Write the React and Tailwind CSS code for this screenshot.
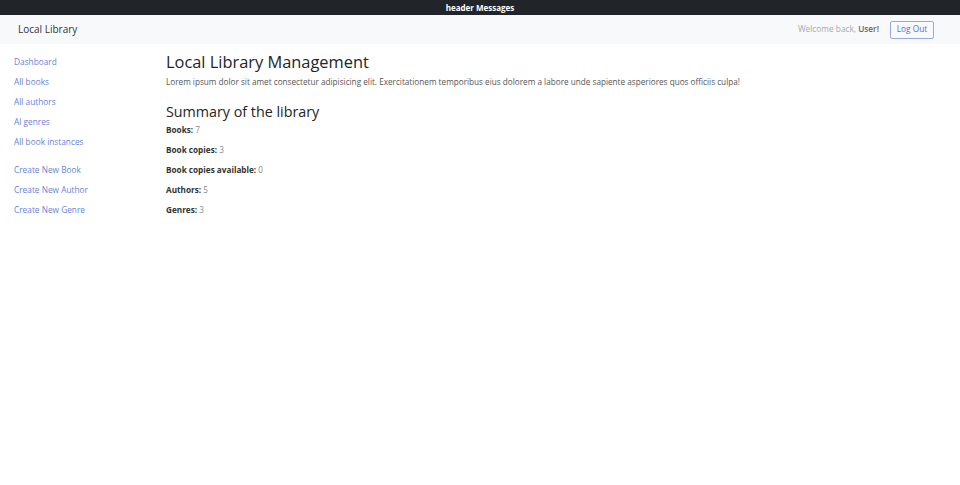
export default function App() {
  const links1 = ["Dashboard", "All books", "All authors", "Al genres", "All book instances"];
  const links2 = ["Create New Book", "Create New Author", "Create New Genre"];
  const stats = [
    ["Books:", "7"],
    ["Book copies:", "3"],
    ["Book copies available:", "0"],
    ["Authors:", "5"],
    ["Genres:", "3"],
  ];
  return (
    <div className="min-h-[485px] bg-white text-[#212529]" style={{ fontFamily: '"Open Sans", "Noto Sans", sans-serif' }}>
      <div className="h-[15px] bg-[#212529] flex items-center justify-center text-white text-[8px] font-bold">
        header Messages
      </div>
      <div className="h-[29px] bg-[#f8f9fa] flex items-center pl-[18px] pr-[26px]">
        <span className="text-[10px] text-[#333]">Local Library</span>
        <div className="ml-auto flex items-center">
          <span className="text-[8.3px] text-[#aaa]">
            Welcome back, <span className="font-semibold text-[#666]">User!</span>
          </span>
          <button className="ml-[11px] h-[18px] w-[44px] border border-[#9aa8e0] rounded-[2px] text-[8.3px] text-[#5a6fd0] flex items-center justify-center">
            Log Out
          </button>
        </div>
      </div>
      <div className="flex">
        <div className="w-[166px] pl-[14px] pt-[12px] flex flex-col text-[8.3px] text-[#6a7fd8]">
          {links1.map((l) => (
            <div key={l} className="h-[20px] leading-[12px]">{l}</div>
          ))}
          <div className="h-[8px]" />
          {links2.map((l) => (
            <div key={l} className="h-[20px] leading-[12px]">{l}</div>
          ))}
        </div>
        <div className="flex-1 pt-[7px]">
          <h1 className="text-[16.4px] leading-[22px] text-[#212529]">Local Library Management</h1>
          <p className="text-[8.2px] leading-[12px] text-[#555] mt-[3px]">
            Lorem ipsum dolor sit amet consectetur adipisicing elit. Exercitationem temporibus eius dolorem a labore unde sapiente asperiores quos officiis culpa!
          </p>
          <h2 className="text-[14.3px] leading-[20px] mt-[14px] text-[#212529]">Summary of the library</h2>
          <div className="flex flex-col text-[8.2px] mt-[2px]">
            {stats.map(([k, v]) => (
              <div key={k} className="h-[20px] leading-[12px]">
                <span className="font-bold text-[#333]">{k}</span> <span className="text-[#888]">{v}</span>
              </div>
            ))}
          </div>
        </div>
      </div>
    </div>
  );
}
